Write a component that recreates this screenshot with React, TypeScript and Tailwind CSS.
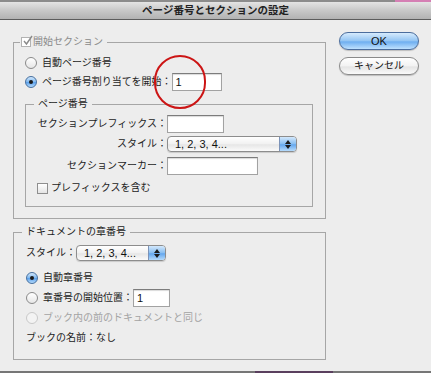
import React from "react";

const Radio = ({ checked = false, disabled = false }: { checked?: boolean; disabled?: boolean }) => {
  if (disabled) {
    return <div className="w-[12px] h-[12px] rounded-full border border-[#c9c9c9] bg-[#f3f3f3] shrink-0" />;
  }
  if (checked) {
    return (
      <div className="w-[12px] h-[12px] rounded-full border border-[#47709f] bg-[linear-gradient(to_bottom,#d3e8fc,#7db7ef_50%,#5fa3ec_55%,#b3dafc)] shrink-0 flex items-center justify-center">
        <div className="w-[4px] h-[4px] rounded-full bg-[#1a1a1a]" />
      </div>
    );
  }
  return (
    <div className="w-[12px] h-[12px] rounded-full border border-[#8a8a8a] bg-[linear-gradient(to_bottom,#ffffff,#e6e6e6)] shrink-0" />
  );
};

const TextInput = ({ w, value = "" }: { w: string; value?: string }) => (
  <div
    className={`${w} h-[18px] bg-white border border-[#a2a2a2] border-t-[#7c7c7c] shadow-[inset_0_1px_1px_rgba(0,0,0,0.15)] flex items-center pl-[3px] text-[11px] text-[#111]`}
  >
    {value}
  </div>
);

const Select = ({ w }: { w: string }) => (
  <div
    className={`${w} h-[16px] rounded-[4px] border border-[#8d8d8d] bg-[linear-gradient(to_bottom,#ffffff,#f1f1f1_50%,#e6e6e6_55%,#fbfbfb)] shadow-[0_1px_1px_rgba(0,0,0,0.15)] flex items-center overflow-hidden`}
  >
    <div className="flex-1 pl-[7px] text-[11px] text-[#111] leading-none">1, 2, 3, 4...</div>
    <div className="w-[17px] h-full border-l border-[#7c93b8] bg-[linear-gradient(to_bottom,#d3e8fc,#86bdf1_50%,#64a7ee_55%,#b6dbfc)] flex flex-col items-center justify-center gap-[1px]">
      <svg width="6" height="4" viewBox="0 0 6 4"><path d="M3 0 L6 4 L0 4 Z" fill="#1b1b1b" /></svg>
      <svg width="6" height="4" viewBox="0 0 6 4"><path d="M0 0 L6 0 L3 4 Z" fill="#1b1b1b" /></svg>
    </div>
  </div>
);

export default function App() {
  return (
    <div className="w-[431px] h-[373px] relative overflow-hidden bg-[#ededed] flex flex-col font-['Liberation_Sans','Noto_Sans_CJK_JP',sans-serif] text-[10px] text-[#1c1c1c] leading-none">
      {/* top strip */}
      <div className="h-[2px] flex">
        <div className="flex-1 bg-[#8c8c8c]" />
        <div className="w-[36px] bg-[#d57fb4]" />
      </div>
      {/* title bar */}
      <div className="h-[17px] bg-[linear-gradient(to_bottom,#e4e4e4,#c8c8c8_50%,#b2b2b2)] flex items-center justify-center text-[10.5px] font-bold text-[#222] font-['Noto_Sans_CJK_JP',sans-serif]">
        ページ番号とセクションの設定
      </div>
      <div className="h-[1px] bg-[#5c5c5c]" />

      {/* body */}
      <div className="flex-1 flex pl-[13px]">
        <div className="w-[313px] pt-[22px]">
          {/* Box 1 */}
          <div className="border border-[#a6a6a6] pl-[11px] pr-[12px] pb-[11px]">
            <div className="-mt-[8px] h-[14px] flex items-center">
              <div className="-ml-[5px] pl-[1px] pr-[4px] bg-[#ededed] flex items-center gap-[2px] h-full">
                <div className="w-[10px] h-[10px] border border-[#b2b2b2] bg-white relative">
                  <svg className="absolute -top-[3px] left-[0px]" width="11" height="11" viewBox="0 0 11 11">
                    <path d="M2 6 L4.5 9 L10 1" stroke="#8a8a8a" strokeWidth="1.4" fill="none" />
                  </svg>
                </div>
                <span className="text-[#8a8a8a]">開始セクション</span>
              </div>
            </div>
            <div className="mt-[5px] h-[18px] flex items-center">
              <Radio />
              <span className="ml-[5px]">自動ページ番号</span>
            </div>
            <div className="mt-[1px] h-[18px] flex items-center">
              <Radio checked />
              <span className="ml-[5px]">ページ番号割り当てを開始：</span>
              <TextInput w="w-[50px]" value="1" />
            </div>

            {/* Inner box */}
            <div className="mt-[13px] border border-[#a6a6a6] pb-[11px]">
              <div className="-mt-[8px] h-[14px] flex items-center">
                <span className="ml-[8px] px-[4px] bg-[#ededed] h-full flex items-center">ページ番号</span>
              </div>
              <div className="mt-[4px] h-[18px] flex items-center">
                <span className="w-[141px] text-right">セクションプレフィックス：</span>
                <TextInput w="w-[57px]" />
              </div>
              <div className="mt-[2px] h-[18px] flex items-center">
                <span className="w-[141px] text-right">スタイル：</span>
                <Select w="w-[130px]" />
              </div>
              <div className="mt-[4px] h-[18px] flex items-center">
                <span className="w-[141px] text-right">セクションマーカー：</span>
                <TextInput w="w-[91px]" />
              </div>
              <div className="mt-[6px] h-[14px] flex items-center pl-[11px]">
                <div className="w-[11px] h-[11px] border border-[#8e8e8e] bg-[linear-gradient(to_bottom,#ffffff,#e4e4e4)] shrink-0" />
                <span className="ml-[3px]">プレフィックスを含む</span>
              </div>
            </div>
          </div>

          {/* Box 2 */}
          <div className="mt-[13px] border border-[#a6a6a6] pl-[12px] pb-[12px]">
            <div className="-mt-[8px] h-[14px] flex items-center">
              <span className="-ml-[4px] px-[4px] bg-[#ededed] h-full flex items-center">ドキュメントの章番号</span>
            </div>
            <div className="mt-[5px] h-[18px] flex items-center">
              <span>スタイル：</span>
              <Select w="w-[90px]" />
            </div>
            <div className="mt-[7px] h-[18px] flex items-center">
              <Radio checked />
              <span className="ml-[5px]">自動章番号</span>
            </div>
            <div className="mt-[2px] h-[18px] flex items-center">
              <Radio />
              <span className="ml-[5px]">章番号の開始位置：</span>
              <TextInput w="w-[37px]" value="1" />
            </div>
            <div className="mt-[2px] h-[18px] flex items-center">
              <Radio disabled />
              <span className="ml-[5px] text-[#a3a3a3]">ブック内の前のドキュメントと同じ</span>
            </div>
            <div className="mt-[2px] h-[18px] flex items-center">
              <span>ブックの名前：なし</span>
            </div>
          </div>
        </div>

        {/* Buttons */}
        <div className="ml-[13px] pt-[12px] flex flex-col gap-[7px]">
          <div className="w-[80px] h-[18px] rounded-full border border-[#4b6d9d] bg-[linear-gradient(to_bottom,#d6ebfd,#92c4f3_50%,#6eaef0_55%,#bfe1fe)] shadow-[0_1px_1px_rgba(0,0,0,0.2)] flex items-center justify-center text-[11px] text-[#111]">
            OK
          </div>
          <div className="w-[80px] h-[18px] rounded-full border border-[#8a8a8a] bg-[linear-gradient(to_bottom,#ffffff,#f2f2f2_50%,#e4e4e4_55%,#fafafa)] shadow-[0_1px_1px_rgba(0,0,0,0.2)] flex items-center justify-center text-[10px] text-[#111]">
            キャンセル
          </div>
        </div>
      </div>

      {/* bottom strip */}
      <div className="h-[2px] flex">
        <div className="w-[255px] bg-[#767676]" />
        <div className="w-[78px] bg-[#5a3f5e]" />
        <div className="flex-1 bg-[#767676]" />
      </div>

      {/* red annotation circle */}
      <div className="absolute left-[154px] top-[55px] w-[52px] h-[54px] rounded-full border-2 border-[#cc1515]" />
    </div>
  );
}
